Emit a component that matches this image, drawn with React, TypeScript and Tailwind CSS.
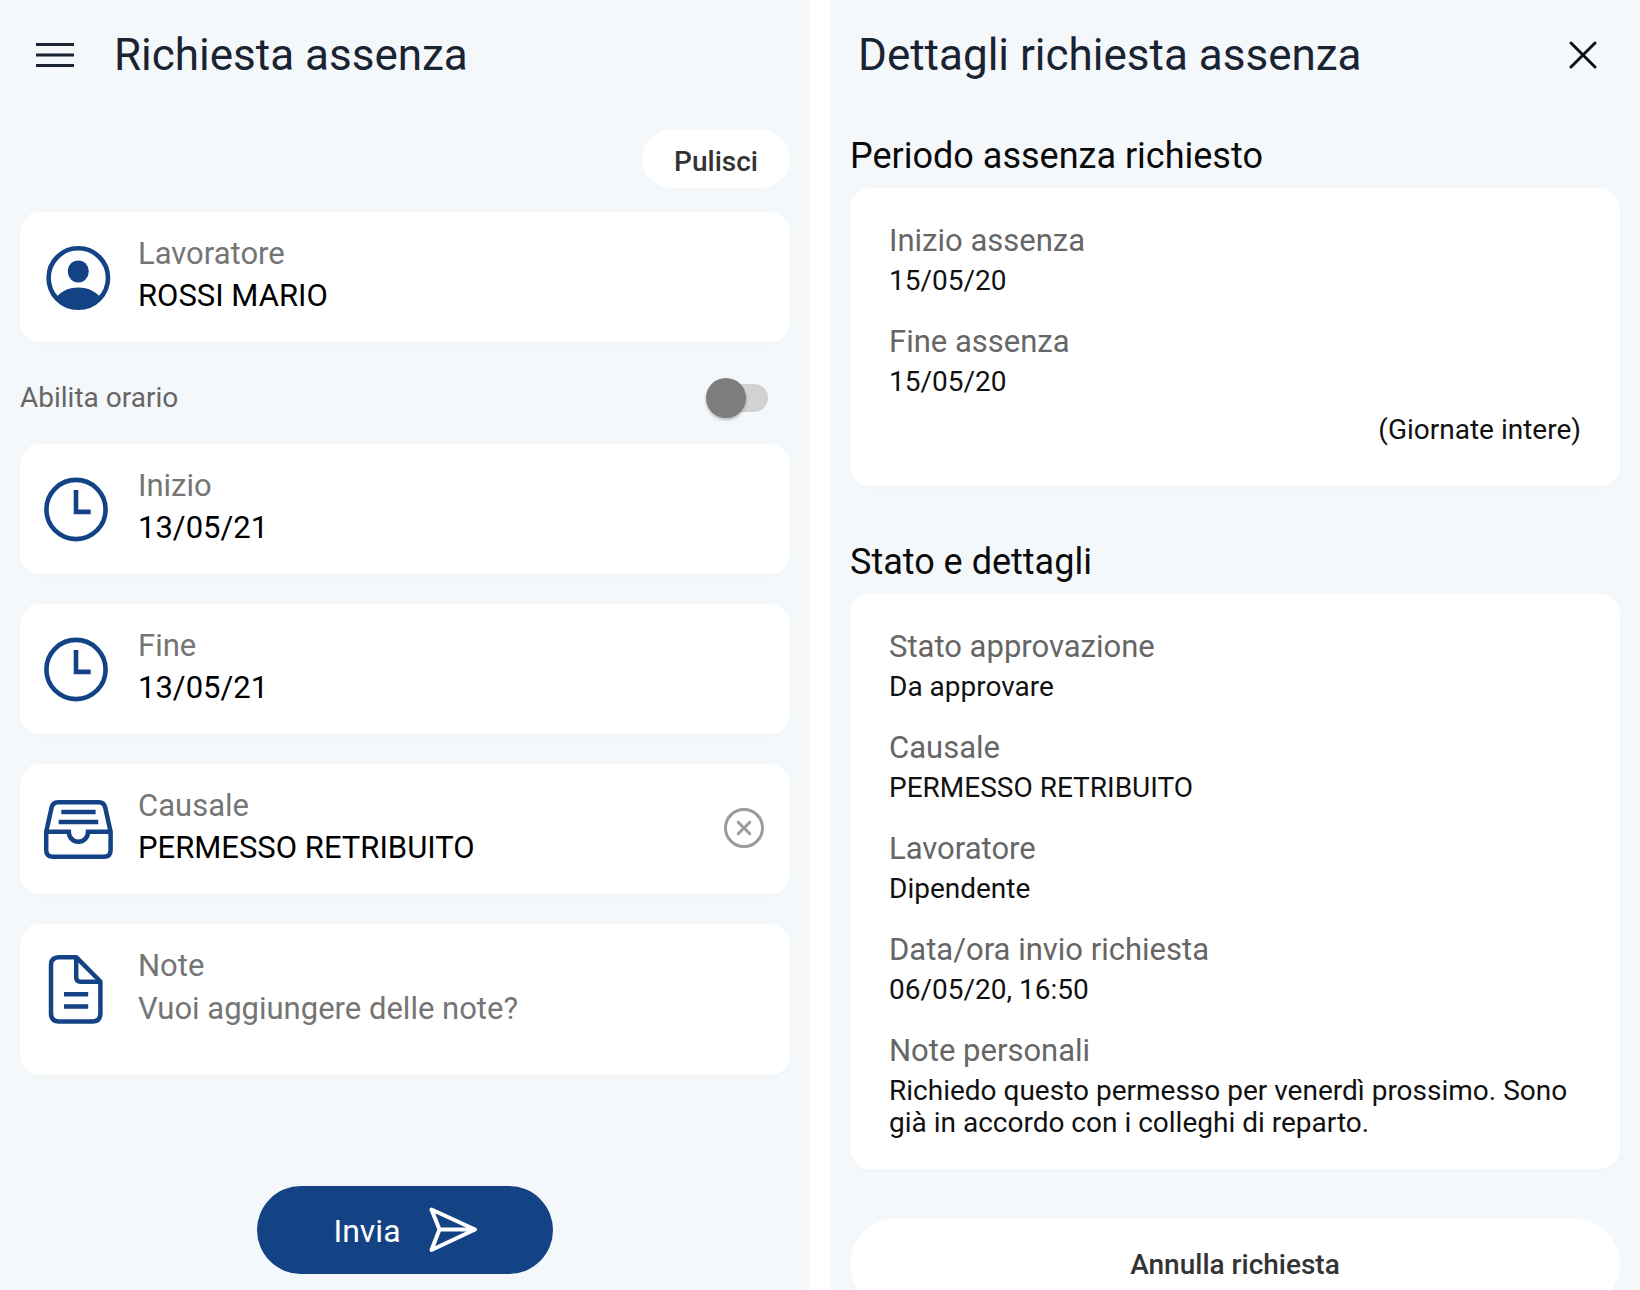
import { useState } from "react";
import type { ReactNode } from "react";

type FieldCardProps = {
  id: string;
  label: string;
  icon: ReactNode;
  value: string;
  onChange: (value: string) => void;
  onClear?: () => void;
};

type Detail = {
  label: string;
  value: string;
};

const period: Detail[] = [
  { label: "Inizio assenza", value: "15/05/20" },
  { label: "Fine assenza", value: "15/05/20" },
];

const details: Detail[] = [
  { label: "Stato approvazione", value: "Da approvare" },
  { label: "Causale", value: "PERMESSO RETRIBUITO" },
  { label: "Lavoratore", value: "Dipendente" },
  { label: "Data/ora invio richiesta", value: "06/05/20, 16:50" },
  {
    label: "Note personali",
    value:
      "Richiedo questo permesso per venerdì prossimo. Sono già in accordo con i colleghi di reparto.",
  },
];

function UserIcon() {
  return (
    <svg viewBox="0 0 72 72" className="mt-2 size-[72px] shrink-0" fill="none" aria-hidden="true">
      <circle cx="36.3" cy="36" r="29.7" stroke="#134384" strokeWidth="4.6" />
      <ellipse cx="36.3" cy="29.4" rx="10.5" ry="11" fill="#134384" />
      <path
        d="M14.5 55C20 48.5 28 45.5 36.3 45.5S52.6 48.5 58.1 55A30 30 0 0 1 14.5 55Z"
        fill="#134384"
      />
    </svg>
  );
}

function ClockIcon() {
  return (
    <svg viewBox="0 0 72 72" className="mt-2 size-[72px] shrink-0" fill="none" aria-hidden="true">
      <circle cx="34" cy="35.5" r="29.6" stroke="#134384" strokeWidth="4.6" />
      <path d="M34 16V37.9H48.7" stroke="#134384" strokeWidth="4.6" />
    </svg>
  );
}

function TrayIcon() {
  return (
    <svg viewBox="0 0 72 72" className="mt-2 size-[72px] shrink-0" fill="none" aria-hidden="true">
      <g stroke="#134384" strokeWidth="4.5">
        <path d="M4.2 37.7L9.6 13.5Q10.8 8.2 16 8.2H57Q62 8.2 63.2 13.5L68.6 37.7V56Q68.6 62.8 61.8 62.8H11Q4.2 62.8 4.2 56Z" />
        <path d="M4.2 37.7H26.8C26.8 43.5 31 47.8 36.4 47.8S46 43.5 46 37.7H68.6" />
        <path d="M19.3 18H53.6M16.7 28H56.2" />
      </g>
    </svg>
  );
}

function NoteIcon() {
  return (
    <svg viewBox="0 0 72 72" className="mt-2 size-[72px] shrink-0" fill="none" aria-hidden="true">
      <g stroke="#134384" strokeWidth="4.5" strokeLinejoin="round">
        <path d="M9 11Q9 3.2 17 3.2H34.2L58.4 27.5V59.5Q58.4 67.4 50.5 67.4H17Q9 67.4 9 59.5Z" />
        <path d="M34.2 3.2V23.5Q34.2 27.7 38.4 27.7H58.4" />
        <path d="M22 40.3H46.2M22 52.6H46.2" />
      </g>
    </svg>
  );
}

function FieldCard({ id, label, icon, value, onChange, onClear }: FieldCardProps) {
  return (
    <div className="flex h-[130px] gap-6 rounded-[20px] bg-white pt-[22px] pr-[26px] pl-[22px] shadow-[0_2px_4px_rgba(0,0,0,0.02)]">
      {icon}
      <div className="flex min-w-0 flex-1 flex-col">
        <label htmlFor={id} className="text-[31px] leading-10 text-[#757575]">
          {label}
        </label>
        <input
          id={id}
          type="text"
          value={value}
          onChange={(e) => onChange(e.target.value)}
          className="h-11 w-full bg-transparent text-[31px] text-black outline-none"
        />
      </div>
      {onClear && (
        <button type="button" aria-label="Rimuovi causale" onClick={onClear} className="mt-[22px] size-10">
          <svg viewBox="0 0 40 40" className="size-10" fill="none" stroke="#9b9b9b" strokeWidth="3">
            <circle cx="20" cy="20" r="18.5" />
            <path d="M14.2 14.2L25.8 25.8M25.8 14.2L14.2 25.8" strokeLinecap="round" />
          </svg>
        </button>
      )}
    </div>
  );
}

function DetailList({ items }: { items: Detail[] }) {
  return (
    <dl className="flex flex-col gap-[25px]">
      {items.map((item) => (
        <div key={item.label} className="flex flex-col gap-1">
          <dt className="text-[31px] leading-10 text-[#666666]">{item.label}</dt>
          <dd className="text-[28px] leading-8 text-[#111111]">{item.value}</dd>
        </div>
      ))}
    </dl>
  );
}

function RequestForm() {
  const [worker, setWorker] = useState("ROSSI MARIO");
  const [start, setStart] = useState("13/05/21");
  const [end, setEnd] = useState("13/05/21");
  const [reason, setReason] = useState("PERMESSO RETRIBUITO");
  const [note, setNote] = useState("");
  const [withTime, setWithTime] = useState(false);

  const handleReset = () => {
    setWorker("");
    setStart("");
    setEnd("");
    setReason("");
    setNote("");
    setWithTime(false);
  };

  return (
    <section className="flex-1 overflow-y-auto bg-[#f5f8fb] px-5 [scrollbar-width:none]">
      <header className="flex h-[109px] items-center gap-10 pl-4">
        <button type="button" aria-label="Menu" className="w-[38px]">
          <svg viewBox="0 0 38 26" className="h-[26px] w-[38px]" stroke="#1a2331" strokeWidth="3">
            <path d="M0 2.5H38M0 13H38M0 23.5H38" />
          </svg>
        </button>
        <h1 className="text-[44px] text-[#1a2331]">Richiesta assenza</h1>
      </header>

      <form onSubmit={(e) => e.preventDefault()}>
        <div className="mt-[21px] mb-6 flex justify-end">
          <button
            type="button"
            onClick={handleReset}
            className="h-[58px] rounded-full bg-white px-8 pt-1.5 text-[28px] font-medium text-[#333333]"
          >
            Pulisci
          </button>
        </div>

        <FieldCard id="worker" label="Lavoratore" icon={<UserIcon />} value={worker} onChange={setWorker} />

        <div className="mt-[34px] mb-6 flex h-11 items-center justify-between pr-[22px]">
          <label htmlFor="with-time" className="text-[28px] text-[#666666]">
            Abilita orario
          </label>
          <input
            id="with-time"
            type="checkbox"
            role="switch"
            checked={withTime}
            onChange={(e) => setWithTime(e.target.checked)}
            className="relative h-7 w-[60px] appearance-none rounded-full bg-[#d2d2d2] before:absolute before:-top-1.5 before:-left-0.5 before:size-10 before:rounded-full before:bg-[#7d7d7d] before:shadow-[0_2px_3px_rgba(0,0,0,0.25)] checked:bg-[#a1b4ce] checked:before:left-[22px] checked:before:bg-[#134384]"
          />
        </div>

        <div className="flex flex-col gap-[30px]">
          <FieldCard id="start" label="Inizio" icon={<ClockIcon />} value={start} onChange={setStart} />
          <FieldCard id="end" label="Fine" icon={<ClockIcon />} value={end} onChange={setEnd} />
          <FieldCard
            id="reason"
            label="Causale"
            icon={<TrayIcon />}
            value={reason}
            onChange={setReason}
            onClear={() => setReason("")}
          />
          <div className="flex gap-6 rounded-[20px] bg-white px-[22px] pt-[22px] pb-[25px] shadow-[0_2px_4px_rgba(0,0,0,0.02)]">
            <NoteIcon />
            <div className="flex min-w-0 flex-1 flex-col">
              <label htmlFor="note" className="text-[31px] leading-10 text-[#757575]">
                Note
              </label>
              <textarea
                id="note"
                rows={1}
                value={note}
                onChange={(e) => setNote(e.target.value)}
                placeholder="Vuoi aggiungere delle note?"
                className="h-16 w-full resize-none bg-transparent pt-[3px] text-[31px] leading-10 text-black outline-none placeholder:text-[#757575]"
              />
            </div>
          </div>
        </div>

        <div className="mt-[111px] mb-4 flex justify-center">
          <button
            type="submit"
            className="flex h-[88px] w-[296px] items-center justify-center gap-7 rounded-full bg-[#134384] text-[32px] text-white"
          >
            <span className="pt-0.5">Invia</span>
            <svg
              viewBox="0 0 48 46"
              className="h-[46px] w-12"
              fill="none"
              stroke="currentColor"
              strokeWidth="4"
              strokeLinejoin="round"
              aria-hidden="true"
            >
              <path d="M2.5 2.5L46 22.5L2.5 43L10.5 22.5Z" />
              <path d="M10.5 22.5H46" />
            </svg>
          </button>
        </div>
      </form>
    </section>
  );
}

function RequestDetails() {
  return (
    <section className="flex-1 overflow-y-auto bg-[#f5f8fb] px-5 [scrollbar-width:none]">
      <header className="flex h-[109px] items-center justify-between pr-[23px] pl-2">
        <h1 className="text-[44px] text-[#1a2331]">Dettagli richiesta assenza</h1>
        <button type="button" aria-label="Chiudi">
          <svg viewBox="0 0 28 28" className="size-7" stroke="#0b0f17" strokeWidth="3" strokeLinecap="round">
            <path d="M2 2L26 26M26 2L2 26" />
          </svg>
        </button>
      </header>

      <h2 className="mt-[27px] mb-3 text-[36px] leading-10 text-[#0a0a0a]">Periodo assenza richiesto</h2>
      <div className="rounded-[20px] bg-white px-[39px] pt-[33px] pb-10 shadow-[0_2px_4px_rgba(0,0,0,0.02)]">
        <DetailList items={period} />
        <p className="mt-4 text-right text-[28px] leading-8 text-[#111111]">(Giornate intere)</p>
      </div>

      <h2 className="mt-14 mb-3 text-[36px] leading-10 text-[#0a0a0a]">Stato e dettagli</h2>
      <div className="rounded-[20px] bg-white px-[39px] pt-[33px] pb-[30px] shadow-[0_2px_4px_rgba(0,0,0,0.02)]">
        <DetailList items={details} />
      </div>

      <button
        type="button"
        className="mt-[50px] mb-5 h-[90px] w-full rounded-full bg-white pt-0.5 text-[28px] font-medium text-[#333333]"
      >
        Annulla richiesta
      </button>
    </section>
  );
}

export default function App() {
  return (
    <main className="flex h-screen gap-5 bg-white font-['Roboto',sans-serif]">
      <RequestForm />
      <RequestDetails />
    </main>
  );
}
